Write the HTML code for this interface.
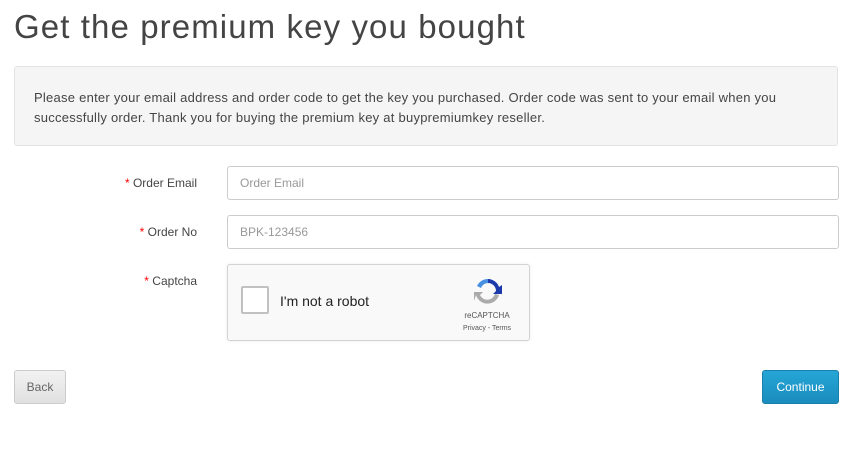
<!DOCTYPE html>
<html><head><style>
body{margin:0;background:#fff;font-family:"Liberation Sans",sans-serif;color:#555;width:856px;height:459px;overflow:hidden;position:relative}
.a{position:absolute}
h1{position:absolute;left:14px;top:8px;margin:0;font-weight:normal;font-size:33px;color:#444;letter-spacing:1.1px}
.well{left:14px;top:66px;width:822px;height:78px;background:#f5f5f5;border:1px solid #e3e3e3;border-radius:3px}
.well p{margin:0;position:absolute;left:19px;top:21px;width:770px;font-size:13px;line-height:20px;color:#444;letter-spacing:0.25px}
.lbl{right:659px;font-size:12px;color:#444}
.lbl b{color:#f00;font-weight:normal}
.inp{left:227px;width:610px;height:32px;border:1px solid #ccc;border-radius:3px;font-size:12px;color:#999;line-height:32px;text-indent:12px}
.cap{left:227px;top:264px;width:301px;height:75px;background:#f9f9f9;border:1px solid #d3d3d3;border-radius:3px;box-shadow:0 0 3px rgba(0,0,0,.08)}
.btn{top:370px;height:32px;border-radius:3px;font-size:12px;line-height:32px;text-align:center}
</style></head><body>
<h1>Get the premium key you bought</h1>
<div class="a well"><p>Please enter your email address and order code to get the key you purchased. Order code was sent to your email when you successfully order. Thank you for buying the premium key at buypremiumkey reseller.</p></div>
<div class="a lbl" style="top:176px"><b>*</b> Order Email</div>
<div class="a inp" style="top:166px">Order Email</div>
<div class="a lbl" style="top:225px"><b>*</b> Order No</div>
<div class="a inp" style="top:215px">BPK-123456</div>
<div class="a lbl" style="top:274px"><b>*</b> Captcha</div>
<div class="a cap">
 <div class="a" style="left:13px;top:21px;width:24px;height:24px;border:2px solid #c1c1c1;border-radius:2px;background:#fff"></div>
 <div class="a" style="left:52px;top:28px;font-size:14px;color:#222">I'm not a robot</div>
 <svg class="a" style="left:244px;top:10px" width="32" height="32" viewBox="0 0 32 32">
  <path d="M16 4a12 12 0 0 0-11 7l4 2a8 8 0 0 1 7-5z" fill="#4a90e2"/>
  <path d="M16 4a12 12 0 0 1 11 8l3-2v9h-9l3-3a8 8 0 0 0-8-8z" fill="#1c3aa9"/>
  <path d="M4 20a12 12 0 0 0 23 0l-4-1a8 8 0 0 1-15 1l3-3H2v9z" fill="#ababab"/>
 </svg>
 <div class="a" style="left:220px;top:46px;width:78px;text-align:center;font-size:8px;color:#555">reCAPTCHA</div>
 <div class="a" style="left:220px;top:60px;width:78px;text-align:center;font-size:7px;color:#555">Privacy - Terms</div>
</div>
<div class="a btn" style="left:14px;width:50px;background:linear-gradient(#f2f2f2,#e0e0e0);border:1px solid #ccc;color:#666">Back</div>
<div class="a btn" style="left:762px;width:75px;background:linear-gradient(#25a6d6,#1a8cbd);border:1px solid #1a7fab;color:#fff">Continue</div>
</body></html>
